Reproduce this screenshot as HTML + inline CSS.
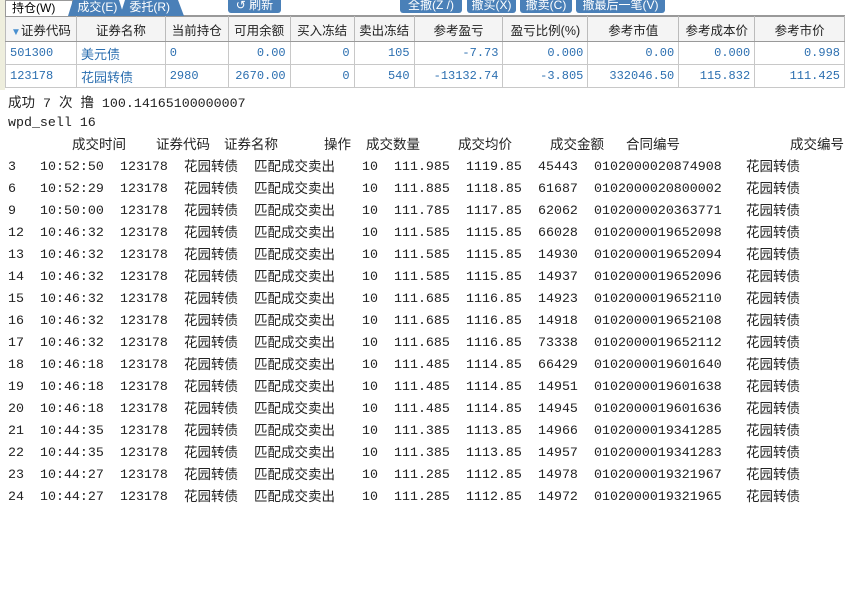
<!DOCTYPE html>
<html><head><meta charset="utf-8"><style>
*{margin:0;padding:0;box-sizing:border-box}
body{width:845px;height:607px;background:#fff;position:relative;overflow:hidden;font-family:"Liberation Sans","Noto Sans CJK SC",sans-serif}
.a{position:absolute;white-space:nowrap}
.tab{position:absolute;top:0;height:16px;background:#4a80b8;color:#fff;font-size:12px;line-height:15px;padding-left:6px}
.btn{position:absolute;top:0;height:13px;background:#4a80b8;color:#fff;font-size:12px;line-height:11px;border-radius:0 0 3px 3px;text-align:center;overflow:hidden}
table{position:absolute;left:5px;top:16px;border-collapse:collapse;font-size:12px}
td{border:1px solid #c8c8c8;height:23px;padding:0 4px;white-space:nowrap;color:#2c6fb0;font-family:"Liberation Mono","Noto Sans CJK SC",monospace;font-size:12px}
tr.h td{background:#f4f4f4;color:#222;text-align:center;font-family:"Liberation Sans","Noto Sans CJK SC",sans-serif;font-size:12.5px;height:25px;border-color:#999 #bbb #999 #bbb}
td.r{text-align:right}
td.n{font-family:"Liberation Sans","Noto Sans CJK SC",sans-serif;font-size:13px}
.m{font-family:"Liberation Mono","Noto Sans CJK SC",monospace;font-size:13.3px;color:#222;line-height:16px}
.c{font-family:"Noto Sans CJK SC",sans-serif;font-size:13.5px;color:#222;line-height:16px}
</style></head><body>
<div class="a" style="left:0;top:0;width:5px;height:90px;background:#eeeedd"></div>
<div class="a" style="left:5px;top:0;width:840px;height:16px;border-bottom:1px solid #999"></div>
<div class="tab" style="left:5px;width:68px;background:#fff;color:#000;border:1px solid #999;border-bottom:none">持仓(W)</div>
<div class="tab" style="left:68px;width:56px;clip-path:polygon(5px 0,calc(100% - 5px) 0,100% 100%,0 100%)">&nbsp;成交(E)</div>
<div class="tab" style="left:120px;width:64px;clip-path:polygon(5px 0,calc(100% - 6px) 0,100% 100%,0 100%)">&nbsp;委托(R)</div>
<div class="btn" style="left:228px;width:53px">↺ 刷新</div>
<div class="btn" style="left:400px;width:62px">全撤(Z /)</div>
<div class="btn" style="left:467px;width:49px">撤买(X)</div>
<div class="btn" style="left:520px;width:52px">撤卖(C)</div>
<div class="btn" style="left:576px;width:89px">撤最后一笔(V)</div>
<table>
<colgroup><col style="width:71px"><col style="width:89px"><col style="width:63px"><col style="width:62px"><col style="width:64px"><col style="width:60px"><col style="width:89px"><col style="width:85px"><col style="width:91px"><col style="width:76px"><col style="width:90px"></colgroup>
<tr class="h"><td><span style="color:#4a90d0;font-size:10px">▼</span>证券代码</td><td>证券名称</td><td>当前持仓</td><td>可用余额</td><td>买入冻结</td><td>卖出冻结</td><td>参考盈亏</td><td>盈亏比例(%)</td><td>参考市值</td><td>参考成本价</td><td>参考市价</td></tr>
<tr><td>501300</td><td class="n">美元债</td><td>0</td><td class="r">0.00</td><td class="r">0</td><td class="r">105</td><td class="r">-7.73</td><td class="r">0.000</td><td class="r">0.00</td><td class="r">0.000</td><td class="r">0.998</td></tr>
<tr><td>123178</td><td class="n">花园转债</td><td>2980</td><td class="r">2670.00</td><td class="r">0</td><td class="r">540</td><td class="r">-13132.74</td><td class="r">-3.805</td><td class="r">332046.50</td><td class="r">115.832</td><td class="r">111.425</td></tr>
</table>
<div class="a m" style="left:8px;top:93px"><span class="c">成功</span> 7 <span class="c">次</span> <span class="c">撸</span> 100.14165100000007</div>
<div class="a m" style="left:8px;top:115px">wpd_sell 16</div>
<div class="a c" style="top:135px;left:72px">成交时间</div>
<div class="a c" style="top:135px;left:156px">证券代码</div>
<div class="a c" style="top:135px;left:224px">证券名称</div>
<div class="a c" style="top:135px;left:324px">操作</div>
<div class="a c" style="top:135px;left:366px">成交数量</div>
<div class="a c" style="top:135px;left:458px">成交均价</div>
<div class="a c" style="top:135px;left:550px">成交金额</div>
<div class="a c" style="top:135px;left:626px">合同编号</div>
<div class="a c" style="top:135px;left:790px">成交编号</div>
<div id="rows"></div>
<script>
var d=[["3","10:52:50","111.985","1119.85","45443","0102000020874908"],
["6","10:52:29","111.885","1118.85","61687","0102000020800002"],
["9","10:50:00","111.785","1117.85","62062","0102000020363771"],
["12","10:46:32","111.585","1115.85","66028","0102000019652098"],
["13","10:46:32","111.585","1115.85","14930","0102000019652094"],
["14","10:46:32","111.585","1115.85","14937","0102000019652096"],
["15","10:46:32","111.685","1116.85","14923","0102000019652110"],
["16","10:46:32","111.685","1116.85","14918","0102000019652108"],
["17","10:46:32","111.685","1116.85","73338","0102000019652112"],
["18","10:46:18","111.485","1114.85","66429","0102000019601640"],
["19","10:46:18","111.485","1114.85","14951","0102000019601638"],
["20","10:46:18","111.485","1114.85","14945","0102000019601636"],
["21","10:44:35","111.385","1113.85","14966","0102000019341285"],
["22","10:44:35","111.385","1113.85","14957","0102000019341283"],
["23","10:44:27","111.285","1112.85","14978","0102000019321967"],
["24","10:44:27","111.285","1112.85","14972","0102000019321965"]];
var h="";
d.forEach(function(r,i){var t=159+i*22;
function m(x,s){h+='<div class="a m" style="top:'+t+'px;left:'+x+'px">'+s+'</div>';}
function c(x,s){h+='<div class="a c" style="top:'+(t-2)+'px;left:'+x+'px">'+s+'</div>';}
m(8,r[0]);m(40,r[1]);m(120,"123178");c(184,"花园转债");c(254,"匹配成交卖出");m(362,"10");m(394,r[2]);m(466,r[3]);m(538,r[4]);m(594,r[5]);c(746,"花园转债");});
document.getElementById("rows").innerHTML=h;
</script>
</body></html>
